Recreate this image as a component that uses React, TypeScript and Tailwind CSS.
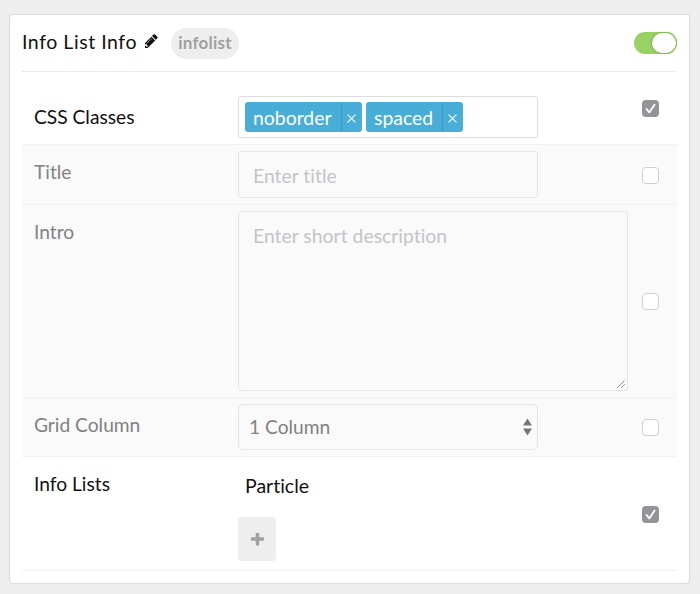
import React from "react";

function Check({ checked = false, className = "" }: { checked?: boolean; className?: string }) {
  return (
    <span
      role="checkbox"
      aria-checked={checked}
      className={`block h-[17px] w-[17px] shrink-0 rounded-[4px] ${
        checked ? "bg-[#949498]" : "border border-[#cfcfcf] bg-white"
      } ${className}`}
    >
      {checked && (
        <svg viewBox="0 0 17 17" className="h-[17px] w-[17px]" fill="none" stroke="#fff" strokeWidth="1.8" strokeLinecap="round" strokeLinejoin="round">
          <path d="M4.6 9 7.3 12.4 12.6 4.6" />
        </svg>
      )}
    </span>
  );
}

function Tag({ label, className = "" }: { label: string; className?: string }) {
  return (
    <span className={`flex h-[30px] rounded-[3px] bg-[#48aed7] text-white ${className}`}>
      <span className="flex-1 pl-2 text-[19.4px] leading-[31px]">{label}</span>
      <span className="flex w-[21px] items-center justify-center border-l border-[#3b9dc5] pr-px">
        <svg viewBox="0 0 9 9" className="mt-[3px] h-[9px] w-[9px]" fill="none" stroke="#fff" strokeWidth="1.2">
          <path d="M.6.6 8.4 8.4M8.4.6.6 8.4" />
        </svg>
      </span>
    </span>
  );
}

function Row({
  label,
  children,
  checked = false,
  className = "",
  labelClass = "",
  checkClass = "",
}: {
  label: string;
  children: React.ReactNode;
  checked?: boolean;
  className?: string;
  labelClass?: string;
  checkClass?: string;
}) {
  return (
    <div className={`flex border-b pl-3 pr-[18px] ${className}`}>
      <div className={`w-[204px] shrink-0 leading-6 ${labelClass}`}>{label}</div>
      <div className="flex-1">{children}</div>
      <Check checked={checked} className={checkClass} />
    </div>
  );
}

export default function App() {
  return (
    <div className="h-[594px] w-[700px] bg-[#eeeeee] pl-[9px] pt-[14px] font-['Lato',sans-serif] text-[19.2px] text-[#111] [font-variant-ligatures:none]">
      <div className="h-[570px] w-[681px] rounded-[4px] border border-[#dddddd] bg-white px-3 shadow-[0_0_1px_#dddddd]">
        <header className="flex h-[57px] border-b border-[#ebebeb]">
          <h1 className="mt-[15px] w-[123px] whitespace-nowrap text-[19.5px] leading-6 tracking-[0.55px]">Info List Info</h1>
          <svg viewBox="128 128 1536 1536" className="mt-[19px] h-[14px] w-[14px]" fill="#111">
            <path d="M363 1536l91-91-235-235-91 91v107h128v128h107zm523-928q0-22-22-22-10 0-17 7l-542 542q-7 7-7 17 0 22 22 22 10 0 17-7l542-542q7-7 7-17zm-54-192l416 416-832 832h-416v-416zm683 96q0 53-37 90l-166 166-416-416 166-165q36-38 90-38 53 0 91 38l235 234q37 39 37 91z" />
          </svg>
          <span className="ml-3 mt-[13px] flex h-[31px] w-[68px] justify-center rounded-full bg-[#eeeeee] text-[17px] font-bold leading-[30px] tracking-[0.2px] text-[#a0a0a0]">
            infolist
          </span>
          <span className="ml-auto mt-[17px] flex h-[22px] w-[43px] justify-end rounded-full bg-[#98d262] p-px">
            <span className="h-5 w-[24px] rounded-full bg-white shadow-[0_0_1px_1px_#80b853]" />
          </span>
        </header>

        <Row label="CSS Classes" checked className="h-[73px] border-[#f2f2f2]" labelClass="pt-[33px]" checkClass="mt-[28px]">
          <div className="mt-6 flex h-[42px] w-[300px] gap-1 rounded-[3px] border border-[#dddddf] bg-white pl-1.5 pt-[5px]">
            <Tag label="noborder" className="w-[117px]" />
            <Tag label="spaced" className="w-[97px]" />
          </div>
        </Row>

        <Row label="Title" className="h-[60px] border-[#f3f3f3] bg-[#fafafa] text-[#818181]" labelClass="pt-[15px]" checkClass="mt-[22px]">
          <div className="mt-1.5 h-[47px] w-[300px] rounded-[3px] border border-[#e5e5e7] pl-[14px] text-[19.4px] leading-[47px] text-[#c4c4c8]">
            Enter title
          </div>
        </Row>

        <Row label="Intro" className="h-[193px] border-[#f3f3f3] bg-[#fafafa] text-[#818181]" labelClass="pt-[15px]" checkClass="mt-[88px]">
          <div className="mt-1.5 flex h-[180px] w-[390px] justify-between rounded-[3px] border border-[#e5e5e7] pl-[14px] text-[19.4px] leading-[47px] text-[#c4c4c8]">
            <span>Enter short description</span>
            <svg viewBox="0 0 10 10" className="mb-px mr-px h-[10px] w-[10px] self-end" fill="none" stroke="#949494" strokeWidth="1">
              <path d="M1 9 8.5 1.5M5 9 9 5" />
            </svg>
          </div>
        </Row>

        <Row label="Grid Column" className="h-[59px] border-[#f2f2f2] bg-[#fafafa] text-[#818181]" labelClass="pt-[15px]" checkClass="mt-[21px]">
          <div className="mt-1.5 flex h-[46px] w-[300px] items-center justify-between rounded-[5px] border border-[#e5e5e7] pl-[10px] pr-[5px]">
            <span>1 Column</span>
            <svg viewBox="0 0 9 18" className="h-[18px] w-[9px]" fill="#777">
              <path d="M4.5 .5 9 7.5H0zM0 10.5h9L4.5 17.5z" />
            </svg>
          </div>
        </Row>

        <Row label="Info Lists" checked className="h-[114px] border-[#f0f0f0]" labelClass="pt-[15px]" checkClass="mt-[49px]">
          <div className="pl-[7px] pt-[17px] text-[19.5px] leading-6">Particle</div>
          <button className="mt-[19px] flex h-11 w-[38px] items-center justify-center rounded-[4px] bg-[#eeeeee]">
            <svg viewBox="192 192 1408 1408" className="mt-px h-[13px] w-[13px]" fill="#a1a1a1">
              <path d="M1600 736v192q0 40-28 68t-68 28h-416v416q0 40-28 68t-68 28h-192q-40 0-68-28t-28-68v-416h-416q-40 0-68-28t-28-68v-192q0-40 28-68t68-28h416v-416q0-40 28-68t68-28h192q40 0 68 28t28 68v416h416q40 0 68 28t28 68z" />
            </svg>
          </button>
        </Row>
      </div>
    </div>
  );
}
